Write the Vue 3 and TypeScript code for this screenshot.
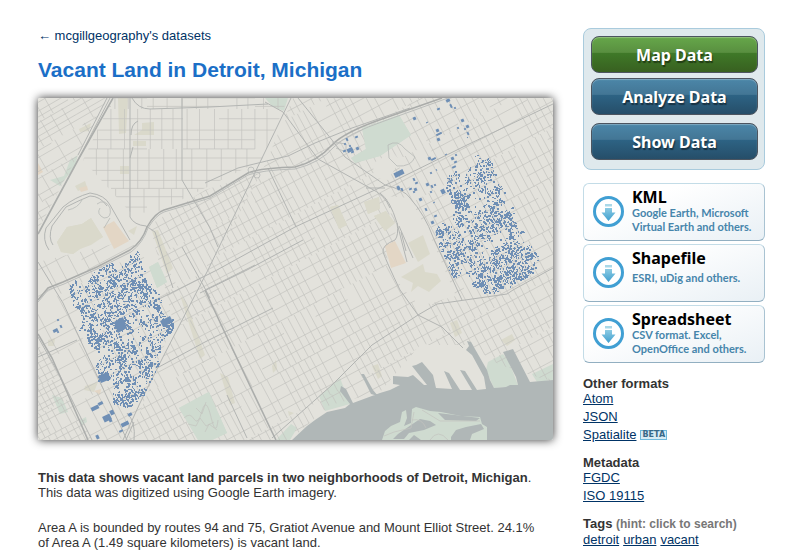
<script setup lang="ts">
type Point = [number, number]

interface District {
  id: string
  area: string
  angle: number
  across: number
  along: number
  seed: number
}

interface Spot {
  x: number
  y: number
  r: number
  gain: number
}

interface Neighborhood {
  outline: Point[]
  seed: number
  base: number
  spots: Spot[]
}

function createRandom(seed: number): () => number {
  let state = seed
  return () => {
    state = (state * 1664525 + 1013904223) % 4294967296
    return state / 4294967296
  }
}

// Street grid: two families of parallel lines with uneven spacing and missing blocks.
function streets(d: District): string {
  const random = createRandom(d.seed)
  const rad = (d.angle * Math.PI) / 180
  const cos = Math.cos(rad)
  const sin = Math.sin(rad)
  const place = (u: number, v: number): string =>
    `${(295 + u * cos - v * sin).toFixed(1)} ${(269 + u * sin + v * cos).toFixed(1)}`
  const parts: string[] = []
  for (let v = -400; v < 400; v += d.along * (0.8 + random() * 0.5)) {
    for (let u = -400; u < 400; u += 36) {
      if (random() > 0.15) parts.push(`M${place(u, v)}L${place(u + 36, v)}`)
    }
  }
  for (let v = -400; v < 400; v += d.along * 4) {
    for (let u = -400; u < 400; u += d.across * (0.85 + random() * 0.35)) {
      if (random() > 0.12) parts.push(`M${place(u, v)}L${place(u, v + d.along * 4)}`)
    }
  }
  return parts.join('')
}

function inside(x: number, y: number, outline: Point[]): boolean {
  let hit = false
  for (let i = 0, j = outline.length - 1; i < outline.length; j = i++) {
    const [xi, yi] = outline[i]
    const [xj, yj] = outline[j]
    if (yi > y !== yj > y && x < ((xj - xi) * (y - yi)) / (yj - yi) + xi) hit = !hit
  }
  return hit
}

// Parcels follow the street grid, so they are picked in rotated cells.
function parcels(n: Neighborhood): string {
  const random = createRandom(n.seed)
  const rad = (-28 * Math.PI) / 180
  const cos = Math.cos(rad)
  const sin = Math.sin(rad)
  const parts: string[] = []
  const blockLevel = new Map<string, number>()
  const cell = 1.7
  for (let i = -180; i < 180; i++) {
    for (let j = -180; j < 180; j++) {
      const u = i * cell
      const v = j * cell
      const x = 295 + u * cos - v * sin
      const y = 269 + u * sin + v * cos
      if (!inside(x, y, n.outline)) continue
      const key = `${Math.floor(i / 4)}:${Math.floor(j / 4)}`
      if (!blockLevel.has(key)) blockLevel.set(key, random() * 0.8 - 0.35)
      let chance = n.base + (blockLevel.get(key) ?? 0)
      for (const s of n.spots) {
        if (Math.hypot(x - s.x, y - s.y) < s.r) chance += s.gain
      }
      if ((i + 400) % 4 === 0) chance -= 0.25
      if ((j + 400) % 8 === 0) chance -= 0.25
      if (random() > chance) continue
      const w = random() > 0.5 ? 2 : 1
      const h = random() > 0.35 ? 2 : 1
      parts.push(`M${Math.round(x)} ${Math.round(y)}h${w}v${h}h${-w}z`)
    }
  }
  return parts.join('')
}

const districts: District[] = [
  { id: 'northwest', area: 'M38 98H108L38 230Z', angle: -30, across: 11, along: 6, seed: 11 },
  { id: 'north', area: 'M113 98H288L262 160L205 188L155 213L130 212L83 160Z', angle: 0, across: 13, along: 10, seed: 23 },
  { id: 'center', area: 'M293 98H553V382L500 365L470 345L420 345L380 392L330 405L290 440H128L163 357L208 270L265 165Z', angle: -28, across: 7, along: 11, seed: 37 },
  { id: 'midwest', area: 'M150 225L205 190L262 172L208 270L175 330Z', angle: -28, across: 7, along: 9, seed: 41 },
  { id: 'southwest', area: 'M38 345L50 358L92 440H38Z', angle: -28, across: 6, along: 6, seed: 53 },
  { id: 'west', area: 'M38 262L130 240L170 290V330L130 440H92L38 337Z', angle: -28, across: 13, along: 13, seed: 67 },
]

const neighborhoods: Neighborhood[] = [
  {
    seed: 5,
    base: 0.48,
    outline: [[67, 284], [78, 277], [82, 288], [97, 268], [113, 262], [116, 276], [130, 254], [138, 250], [142, 266], [148, 280], [164, 302], [166, 318], [173, 318], [172, 330], [160, 345], [161, 358], [152, 378], [140, 402], [128, 407], [112, 404], [112, 380], [97, 380], [95, 364], [103, 355], [88, 347], [86, 333], [77, 330], [82, 320], [78, 308], [72, 308]],
    spots: [
      { x: 119, y: 325, r: 6, gain: 1 }, { x: 168, y: 322, r: 5, gain: 1 }, { x: 85, y: 312, r: 11, gain: 0.2 },
      { x: 128, y: 288, r: 8, gain: 0.2 }, { x: 104, y: 376, r: 6, gain: 0.6 }, { x: 115, y: 400, r: 7, gain: 0.5 },
      { x: 130, y: 403, r: 7, gain: 0.3 }, { x: 134, y: 371, r: 5, gain: -0.6 }, { x: 106, y: 348, r: 7, gain: -0.3 },
      { x: 85, y: 298, r: 7, gain: -0.35 }, { x: 138, y: 338, r: 10, gain: -0.15 },
    ],
  },
  {
    seed: 9,
    base: 0.38,
    outline: [[443, 178], [455, 170], [463, 180], [473, 153], [487, 152], [497, 178], [505, 190], [503, 200], [514, 207], [518, 222], [527, 233], [529, 243], [538, 255], [535, 272], [514, 284], [490, 294], [477, 291], [463, 276], [451, 276], [440, 252], [435, 228], [448, 217], [454, 210], [448, 196]],
    spots: [
      { x: 510, y: 265, r: 25, gain: 0.15 }, { x: 490, y: 276, r: 18, gain: 0.12 }, { x: 458, y: 200, r: 9, gain: 0.2 },
      { x: 485, y: 173, r: 8, gain: 0.25 }, { x: 468, y: 178, r: 5, gain: -0.2 }, { x: 485, y: 225, r: 11, gain: 0.2 },
      { x: 473, y: 200, r: 6, gain: -0.5 }, { x: 453, y: 272, r: 5, gain: 0.4 }, { x: 480, y: 208, r: 5, gain: -0.2 },
      { x: 473, y: 245, r: 6, gain: 0.25 }, { x: 496, y: 243, r: 8, gain: -0.2 }, { x: 478, y: 160, r: 10, gain: -0.2 },
    ],
  },
]

const scattered: [number, number, number, number][] = [
  [53, 329, 5, 3], [57, 319, 2, 2], [60, 325, 2, 3], [57, 331, 2, 2], [91, 406, 8, 4], [98, 402, 5, 3],
  [103, 415, 8, 6], [110, 410, 4, 5], [109, 419, 3, 3], [121, 422, 8, 4], [119, 430, 4, 2], [128, 413, 4, 3],
  [96, 435, 3, 4], [347, 148, 6, 4], [356, 147, 3, 3], [346, 138, 2, 3], [355, 136, 3, 2], [349, 145, 2, 2],
  [343, 150, 3, 2], [344, 143, 2, 2], [351, 151, 3, 2], [394, 171, 10, 5], [413, 117, 3, 3], [437, 108, 3, 2],
  [446, 99, 4, 3], [450, 104, 2, 4], [454, 107, 2, 2], [436, 129, 3, 3], [436, 133, 6, 2], [437, 138, 3, 3],
  [426, 122, 2, 1], [457, 127, 2, 2], [461, 119, 3, 3], [466, 125, 3, 3], [467, 132, 2, 3], [464, 128, 2, 2],
  [467, 137, 1, 1], [428, 157, 3, 3], [431, 158, 5, 2], [445, 154, 2, 1], [451, 157, 3, 3], [455, 154, 2, 2],
  [454, 161, 3, 2], [430, 172, 2, 2], [436, 169, 1, 2], [397, 186, 3, 4], [401, 188, 2, 3], [413, 178, 2, 3],
  [415, 182, 3, 2], [409, 188, 3, 2], [414, 188, 3, 3], [426, 183, 3, 3], [431, 185, 2, 3], [434, 184, 2, 2],
  [419, 198, 3, 3], [425, 208, 2, 3], [433, 202, 2, 1], [430, 191, 2, 2], [434, 215, 3, 2], [431, 221, 3, 3],
  [413, 191, 2, 2], [441, 189, 4, 5], [448, 180, 5, 2], [452, 166, 4, 2], [436, 231, 2, 4],
]

const downloads = [
  { name: 'KML', lines: ['Google Earth, Microsoft', 'Virtual Earth and others.'] },
  { name: 'Shapefile', lines: ['ESRI, uDig and others.'] },
  { name: 'Spreadsheet', lines: ['CSV format. Excel,', 'OpenOffice and others.'] },
]

const formats = [
  { name: 'Atom', beta: false },
  { name: 'JSON', beta: false },
  { name: 'Spatialite', beta: true },
]
const metadata = ['FGDC', 'ISO 19115']
const tags = ['detroit', 'urban', 'vacant']
</script>

<template>
  <div class="page">
    <main class="content">
      <a class="back" href="#datasets">← mcgillgeography's datasets</a>
      <h1>Vacant Land in Detroit, Michigan</h1>
      <svg class="map" viewBox="38 98 515 342" role="img" aria-label="Map of vacant land parcels">
        <defs>
          <clipPath v-for="d in districts" :id="d.id" :key="d.id"><path :d="d.area" /></clipPath>
        </defs>
        <rect class="land" x="38" y="98" width="515" height="342" />

        <g class="block">
          <path d="M118 98H128L126 133L119 134ZM142 123L154 122V135H134L142 130ZM133 141H146V146H133ZM120 166H129V174H120ZM79 129L91 123L89 131L80 132Z" />
          <path d="M57 242L67 227L82 224L91 218L97 228L103 237L91 245L80 249L73 254L61 252Z" />
          <path d="M128 231L137 226L134 235ZM152 231L158 230L173 268L167 274ZM75 186L85 181L87 187L78 191Z" />
          <path d="M330 207L338 205L347 225L339 229ZM364 202L379 197L380 209L368 214ZM374 216L386 211L395 223L385 231Z" />
          <path d="M408 243L423 235L430 254L418 262ZM401 277L423 264L425 272L437 274L441 281L433 288L429 292L418 286L411 292L413 283Z" />
          <path d="M450 323L457 320L462 333L455 337ZM501 340L512 334L515 340L507 346ZM85 386L98 382L94 392L84 390ZM48 340L55 338L54 346L48 346Z" />
          <path d="M272 366L276 360L277 369L273 373ZM372 366L378 364L382 376L378 379ZM220 373L228 377L235 403L230 405ZM180 295L186 302L205 355L200 359ZM288 411L294 413L289 416Z" />
        </g>
        <g class="park">
          <path d="M50 180L64 176L70 160L78 155L74 169L66 178L60 186Z" />
          <path d="M265 98H288L284 111L272 106ZM362 128L399 115L411 135L380 156L355 163L351 158L366 149Z" />
          <path d="M149 267L158 262L167 282L157 288ZM52 395L62 398L68 412L60 414ZM80 420L86 417L87 422L82 425Z" />
          <path d="M179 408L205 394L209 392L227 433L212 440H198Z" />
          <path d="M278 438L291 424L297 428L290 440H277ZM319 396L340 378L350 404L325 411Z" />
          <path d="M488 362L503 354L509 362L518 385L508 387L494 388L486 370ZM532 374L553 364V380L537 382Z" />
        </g>
        <g class="plaza">
          <path d="M103 227L114 221L129 241L114 249ZM385 246L395 241L406 263L391 268ZM79 188L87 186L88 190L81 192ZM38 163L43 172L38 175ZM94 391L101 389L100 395Z" />
        </g>

        <g v-for="d in districts" :key="d.id" :clip-path="`url(#${d.id})`">
          <path class="street" :d="streets(d)" />
        </g>

        <path class="land" d="M386 196L410 198L432 240L456 296L420 306L402 288L386 262L395 238L396 222ZM372 164L392 152L400 160L388 180L376 178Z" />
        <path class="block" d="M57 242L67 227L82 224L91 218L103 237L80 249L73 254L61 252ZM408 243L423 235L430 254L418 262ZM401 277L423 264L425 272L437 274L441 281L433 288L429 292L418 286L411 292L413 283ZM330 207L338 205L347 225L339 229ZM364 202L379 197L380 209L368 214ZM374 216L386 211L395 223L385 231Z" />
        <path class="park" d="M362 128L399 115L411 135L380 156L355 163L351 158L366 149ZM179 408L205 394L209 392L227 433L212 440H198ZM149 267L158 262L167 282L157 288Z" />
        <path class="plaza" d="M385 246L395 241L406 263L391 268Z" />
        <path class="street" d="M184 418q6-6 10 1t8-8t9 6t7 3M188 424l8 2l4-8l6 8l8-4M196 408l6 6l4-12M205 432l4-8l8 6" />

        <g class="road">
          <path d="M130 98V217Q134 225 146 226L155 232L167 270L173 288M132 98Q138 109 150 109L210 107L268 104M182 98V180L210 228L218 247M182 247L202 283L210 298" />
          <path d="M205 183L238 168Q270 160 288 156L315 143L352 128L410 108" />
          <path d="M291 98L208 270L163 357L140 403L123 440M268 168L296 227" />
          <path d="M553 104L467 145L390 183L295 227L217 270L157 300M303 240L247 270L200 293" />
          <path d="M265 102L283 112L318 159L370 188Q385 195 390 208M298 98L332 140L345 157L385 185Q405 190 410 198Q425 215 433 237L462 300" />
          <path d="M366 188H385M380 193Q390 200 397 223Q399 235 395 240Q382 245 383 252Q387 263 400 290L418 315L442 327L463 348" />
          <path d="M272 438L332 385L372 345L418 315L437 304L507 294L513 290L553 268" />
          <path d="M255 265L205 290M157 368L205 342L273 308M227 395L247 438M38 357L77 340M38 262L63 303L93 367L127 440" />
          <path d="M38 337L60 376L92 440M49 250Q42 240 46 228L63 207Q75 197 90 193Q105 195 110 205L130 240M53 245Q48 238 52 226L66 207Q80 200 90 196Q100 196 107 206" />
          <path d="M107 98L78 155M110 98L79 158M138 121Q131 124 131 135M133 147L130 158M397 223L407 262M399 226L413 258M401 232L406 251" />
          <path d="M127 413Q136 422 134 440M134 422L126 440" />
        </g>
        <g class="rail">
          <path d="M113 98L78 160L38 234M38 334L52 358L88 440M205 290L225 333L272 432L276 440" />
        </g>
        <g class="highway">
          <path d="M38 300L48 288L63 282L97 267L130 250Q142 242 147 227Q155 213 164 210L210 196L248 173Q260 168 295 167Q318 161 332 145Q344 132 385 118L442 98" />
        </g>
        <path class="highway-line" d="M38 302L48 290L64 284L97 269L131 252Q143 243 148 228Q156 215 164 212L210 198L248 175Q262 170 295 169Q320 163 334 147Q346 134 387 120L448 98" />
        <g class="ramp">
          <circle cx="251" cy="170" r="3" /><circle cx="257" cy="175" r="3" />
          <path d="M97 204q8-6 13 4q2 10-6 10q-8-4-4-10M82 200q-4 8-14 10M110 218l-6 10M332 142l14 2v8l-10-4M388 145q10-6 17 4l10 8q-4 10-18 9l-8-8z" />
        </g>

        <path class="water" d="M292 440L307 426L315 420L327 412L345 408L350 404L340 391L341 386L346 389L353 403L380 393L390 390L400 385L393 384L393 376L408 377L413 375L424 385L427 385L412 366L416 365L422 362L433 375L436 388L452 389L444 371L449 373L460 390L472 390L460 370L465 371L477 390L486 389L484 377L472 355L466 350L469 346L467 341L471 342L487 370L490 380L494 388L506 387L510 385L518 385L516 377L503 352L513 349L530 382L553 380V440ZM361 374L364 374L373 390L378 396L371 394Z" />
        <g class="park">
          <path d="M382 440L385 431L391 426L400 422L402 412L406 410L407 418L404 426L411 423L412 409L416 407L430 411L441 412L461 416L480 417L482 424L487 427V440Z" />
        </g>
        <path class="water" d="M438 413L480 418L476 421L445 420ZM398 434L411 425L420 419L430 421L436 425L424 430L409 433L404 439H393ZM409 440L414 435L421 440ZM451 437L456 430L466 427L481 424L484 429L472 434L470 440H451Z" />
        <path class="street" d="M384 436L394 432L411 428L414 412M422 410L440 421H480M430 440q8-12 18 0M412 420q10-2 14 8" />

        <path v-for="n in neighborhoods" :key="n.seed" class="parcel" :d="parcels(n)" />
        <rect
          v-for="([x, y, w, h], i) in scattered" :key="i" class="parcel"
          :x="x" :y="y" :width="w" :height="h" :transform="`rotate(-26 ${x + w / 2} ${y + h / 2})`"
        />
        <path class="parcel" d="M114 322L123 317L127 328L118 333ZM160 321L170 316L173 322L163 327ZM98 376L107 372L111 379L101 383Z" />
      </svg>
      <div class="description">
        <p><strong>This data shows vacant land parcels in two neighborhoods of Detroit, Michigan</strong>.<br />This data was digitized using Google Earth imagery.</p>
        <p>Area A is bounded by routes 94 and 75, Gratiot Avenue and Mount Elliot Street. 24.1% of Area A (1.49 square kilometers) is vacant land.</p>
      </div>
    </main>

    <aside class="sidebar">
      <div class="actions">
        <button class="action green" type="button">Map Data</button>
        <button class="action" type="button">Analyze Data</button>
        <button class="action apart" type="button">Show Data</button>
      </div>

      <nav class="downloads" aria-label="Downloads">
        <a v-for="d in downloads" :key="d.name" class="download" :href="`#${d.name}`">
          <svg class="download-icon" viewBox="0 0 31 31" aria-hidden="true">
            <defs>
              <linearGradient :id="`arrow-${d.name}`" x1="0" y1="0" x2="0" y2="1">
                <stop offset="0" stop-color="#8ccbe3" />
                <stop offset="1" stop-color="#3f9fcf" />
              </linearGradient>
            </defs>
            <circle cx="15.5" cy="15.5" r="14" fill="#fff" stroke="#409fd3" stroke-width="3" />
            <path d="M12 8h7v2.500h-7z" fill="#a9d8e8" />
            <path d="M12 12h7v4.500h3.500L15.500 25L8.500 16.500H12z" :fill="`url(#arrow-${d.name})`" />
          </svg>
          <span class="download-text">
            <span class="download-name">{{ d.name }}</span>
            <span class="download-note" :class="{ single: d.lines.length === 1 }">
              <span v-for="line in d.lines" :key="line" class="note-line">{{ line }}</span>
            </span>
          </span>
        </a>
      </nav>

      <section class="group">
        <h2>Other formats</h2>
        <ul>
          <li v-for="f in formats" :key="f.name">
            <a :href="`#${f.name}`">{{ f.name }}</a>
            <span v-if="f.beta" class="beta">BETA</span>
          </li>
        </ul>
      </section>
      <section class="group">
        <h2>Metadata</h2>
        <ul>
          <li v-for="m in metadata" :key="m"><a :href="`#${m}`">{{ m }}</a></li>
        </ul>
      </section>
      <section class="group">
        <h2>Tags <span class="hint">(hint: click to search)</span></h2>
        <div class="tags">
          <a v-for="t in tags" :key="t" :href="`#${t}`">{{ t }}</a>
        </div>
      </section>
    </aside>
  </div>
</template>

<style>
body {
  background: #fff;
}
</style>

<style scoped>
.page {
  display: flex;
  align-items: flex-start;
  gap: 30px;
  padding: 28px 32px 0 38px;
  font-family: "Liberation Sans", Arial, sans-serif;
  font-size: 13px;
  line-height: 15px;
  color: #333;
}
a {
  color: #003366;
}
.content {
  flex: 1;
  min-width: 0;
}
.back {
  display: block;
  text-decoration: none;
}
h1 {
  margin: 14px 0 15px;
  font-size: 21px;
  line-height: 26px;
  color: #1b6fc7;
}
.map {
  display: block;
  width: 100%;
  height: auto;
  border-radius: 2px;
  box-shadow: 0 0 10px #333;
}
.land { fill: #e3e2dc; }
.block { fill: #dad9cb; }
.park { fill: #cfdbd0; }
.plaza { fill: #e3d6c5; }
.water { fill: #b0b7b7; }
.parcel { fill: #6f8fb5; }
.street { fill: none; stroke: #c3c3bf; stroke-width: 0.7; }
.road { fill: none; stroke: #b3b5b3; stroke-width: 1; }
.rail { fill: none; stroke: #acaeac; stroke-width: 1.6; }
.ramp { fill: none; stroke: #b8bab8; stroke-width: 0.8; }
.highway { fill: none; stroke: #aaacaa; stroke-width: 1.5; }
.highway-line { fill: none; stroke: #bbbdbb; stroke-width: 1; }
.description {
  padding: 30px 10px 0 0;
}
.description p {
  margin: 0 0 20px;
}
.sidebar {
  flex: none;
  width: 182px;
}
.actions {
  display: flex;
  flex-direction: column;
  gap: 5px;
  padding: 7px 6px 9px 7px;
  border: 1px solid #a9cbdd;
  border-radius: 8px;
  background: #dfe9ed;
}
.action {
  height: 37px;
  padding: 0;
  border: 1px solid #4c5560;
  border-radius: 8px;
  background: linear-gradient(#4b86a8, #437695 44%, #2d6384 46%, #264e69);
  box-shadow: inset 0 1px 1px #7fa9c0;
  font: bold 16px "Noto Sans", "Open Sans", sans-serif;
  color: #fff;
  text-shadow: 1px 2px 1px rgba(0, 0, 0, 0.45);
}
.green {
  background: linear-gradient(#66a74a, #598f40 44%, #3f7928 46%, #386020);
  box-shadow: inset 0 1px 1px #93c07d;
}
.apart {
  margin-top: 3px;
}
.downloads {
  display: flex;
  flex-direction: column;
  gap: 3px;
  margin: 13px 0;
}
.download {
  display: flex;
  gap: 8px;
  box-sizing: border-box;
  height: 58px;
  padding: 0 0 0 9px;
  border: 1px solid #c3dce7;
  border-right-color: #a9c3d2;
  border-bottom-color: #92afc1;
  border-radius: 6px;
  background: linear-gradient(160deg, #fff 30%, #e9f0f5);
  font-family: "Noto Sans", "Open Sans", sans-serif;
  text-decoration: none;
}
.download-icon {
  flex: none;
  width: 31px;
  height: 31px;
  margin-top: 12px;
}
.download-text {
  display: flex;
  flex-direction: column;
  padding-top: 4px;
  white-space: nowrap;
}
.download-name {
  font-size: 16px;
  font-weight: 700;
  line-height: 18px;
  color: #000;
}
.download-note {
  display: flex;
  flex-direction: column;
  font-family: Lato, "Noto Sans", sans-serif;
  font-size: 11px;
  font-weight: 700;
  line-height: 14px;
  color: #4685ab;
}
.single {
  padding-top: 4px;
}
.group {
  margin-bottom: 13px;
}
h2 {
  margin: 0;
  font-size: 13px;
  line-height: 15px;
}
.hint {
  font-size: 12px;
  color: #777;
}
ul {
  display: flex;
  flex-direction: column;
  gap: 3px;
  margin: 0;
  padding: 0;
  list-style: none;
}
li {
  display: flex;
  align-items: center;
  gap: 4px;
}
.beta {
  padding: 0 1px;
  border: 1px solid #6fb9dd;
  background: #d8ecf5;
  font: bold 8px/8px "DejaVu Sans", sans-serif;
  color: #386887;
}
.tags {
  display: flex;
  gap: 4px;
}
</style>
